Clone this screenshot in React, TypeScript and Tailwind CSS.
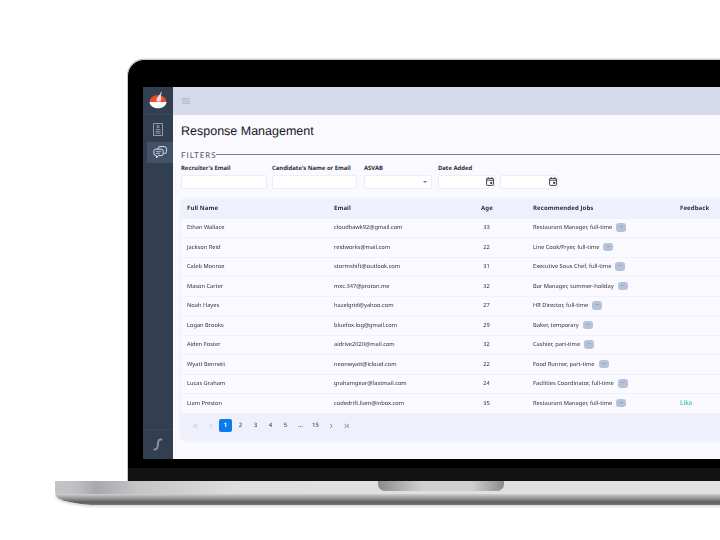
import React from "react";

const rows = [
  ["Ethan Wallace", "cloudhawk92@gmail.com", "33", "Restaurant Manager, full-time", ""],
  ["Jackson Reid", "reidworks@mail.com", "22", "Line Cook/Fryer, full-time", ""],
  ["Caleb Monroe", "stormshift@outlook.com", "31", "Executive Sous Chef, full-time", ""],
  ["Mason Carter", "mxc.347@proton.me", "32", "Bar Manager, summer-holiday", ""],
  ["Noah Hayes", "hazelgrid@yahoo.com", "27", "HR Director, full-time", ""],
  ["Logan Brooks", "bluefox.log@gmail.com", "29", "Baker, temporary", ""],
  ["Aiden Foster", "aidrive2020@mail.com", "32", "Cashier, part-time", ""],
  ["Wyatt Bennett", "neonwyatt@icloud.com", "22", "Food Runner, part-time", ""],
  ["Lucas Graham", "grahamgear@fastmail.com", "24", "Facilities Coordinator, full-time", ""],
  ["Liam Preston", "codedrift.liam@inbox.com", "35", "Restaurant Manager, full-time", "Like"],
];

const Cal = () => (
  <svg width="8" height="9" viewBox="0 0 8 9" fill="none" stroke="#2b2f36" strokeWidth="0.9">
    <rect x="0.6" y="1.4" width="6.8" height="7" rx="0.6" />
    <path d="M0.6 3.2h6.8M2.2.2v1.6M5.8.2v1.6" />
    <rect x="4.2" y="4.9" width="1.9" height="1.9" fill="#2b2f36" stroke="none" />
  </svg>
);

const PageIcon = ({ d, color }: { d: string; color: string }) => (
  <svg width="6" height="6" viewBox="0 0 6 6" fill="none" stroke={color} strokeWidth="0.7" className="mx-auto">
    <path d={d} />
  </svg>
);

function Field({ label, className, pad, children }: { label: string; className: string; pad?: string; children?: React.ReactNode }) {
  return (
    <div className={className}>
      <div className="h-[11px] text-[5.9px] leading-[8px] font-bold text-[#2c2f35] whitespace-nowrap">{label}</div>
      <div className={"h-[14px] bg-white border border-[#eceef6] rounded-[2px] flex items-center justify-end " + (pad ?? "pr-[4px]")}>{children}</div>
    </div>
  );
}

const cols = "grid grid-cols-[147px_147px_52px_147px_1fr] items-center pl-[6px]";

export default function App() {
  return (
    <div className="w-[720px] h-[540px] overflow-hidden bg-white pt-[59px] pl-[127px] [font-family:'Noto_Sans',sans-serif] [text-rendering:geometricPrecision]">
      {/* lid */}
      <div className="w-[640px] h-[422px] bg-black rounded-tl-[17px] border-t-[1.5px] border-l-[1px] border-[#c9c9cb] shadow-[0_-1px_1px_#e8e8e8] flex flex-col">
        <div className="h-[26.5px] shrink-0" />
        <div className="flex h-[372px] ml-[15px] shrink-0 blur-[0.3px]">
          {/* sidebar */}
          <aside className="w-[30px] shrink-0 bg-[#323f50] flex flex-col">
            <div className="h-[28px] border-b border-[#3b4859] flex items-center justify-center">
              <svg width="18" height="20" viewBox="0 0 18 20">
                <path d="M0.5 12a8.5 7 0 0 1 17 0z" fill="#ef4a2c" />
                <path d="M0.5 12h17c-.2 3.6-3.6 6.3-8.5 6.3S.7 15.6.5 12z" fill="#ffffff" />
                <path d="M8 11.5c-1.4-2-.2-3.6 1.4-5.2C10.4 5 11.4 3 13 1.2c-.4 1.6-1 3-1.3 4.3.6 1.4 1 4-.3 6z" fill="#f5ded8" />
              </svg>
            </div>
            <div className="h-[27px] pt-[2px] flex items-center justify-center">
              <svg width="10" height="13" viewBox="0 0 10 13" fill="none" stroke="#aab3c0" strokeWidth="0.8">
                <rect x="0.6" y="0.6" width="8.8" height="11.8" />
                <circle cx="5" cy="3.6" r="1.2" />
                <path d="M2.8 6.6h4.4M2.4 8.4h5.2M2.4 10.2h5.2" />
              </svg>
            </div>
            <div className="h-[21px] ml-[4px] bg-[#43526a] flex items-center justify-center">
              <svg width="14" height="13" viewBox="0 0 14 13" fill="none" stroke="#dfe3ea" strokeWidth="1">
                <path d="M5 3V2.6A2 2 0 0 1 7 .6h4.4a2 2 0 0 1 2 2v3a2 2 0 0 1-2 2h-.8" />
                <path d="M2.8 3.2h5.4a2 2 0 0 1 2 2v2.4a2 2 0 0 1-2 2H5.2L3.6 12l-.3-2.4A2.4 2.4 0 0 1 .8 7.4V5.2a2 2 0 0 1 2-2z" />
                <path d="M3 5.6h5M3 7.4h4" strokeWidth="0.7" />
              </svg>
            </div>
            <div className="flex-1" />
            <div className="h-[30px] border-t border-[#3b4859] flex items-center justify-center">
              <svg width="10" height="13" viewBox="0 0 10 13" fill="none" stroke="#8794a6" strokeWidth="2">
                <path d="M9.2 1.6C6.6 1 5.6 2 5.2 4.2L4.6 8.4C4.2 10.8 3 12 .6 11.4" />
              </svg>
            </div>
          </aside>
          {/* main */}
          <main className="flex-1 min-w-0 bg-[#f9f9ff] flex flex-col">
            <header className="h-[28px] shrink-0 bg-[#d5daea] flex items-center justify-between pl-[9px] pr-[14px]">
              <svg width="8" height="6" viewBox="0 0 8 6" stroke="#a5acbd" strokeWidth="0.9">
                <path d="M0 .8h8M0 3h8M0 5.2h8" />
              </svg>
              <div className="w-[15px] h-[15px] rounded-full bg-[radial-gradient(circle_at_65%_55%,#d8a598_0,#a88b86_45%,#77757c_75%,#b8bac8_100%)] blur-[0.6px]" />
            </header>
            <div className="flex-1 pl-[8px] flex flex-col">
              <h1 className="h-[33px] pt-[6px] [font-family:'Liberation_Sans',sans-serif] text-[12.5px] leading-[20px] text-[#15181d] whitespace-nowrap">Response Management</h1>
              <div className="h-[14px] flex items-center">
                <span className="text-[8px] leading-[10px] tracking-[0.95px] text-[#4d5563] [font-family:'Lato',sans-serif]">FILTERS</span>
                <div className="flex-1 h-px bg-[#7d8087]" />
              </div>
              <div className="flex mt-[2px] w-[420px]">
                <Field label="Recruiter's Email" className="w-[86px] mr-[5px] shrink-0" />
                <Field label="Candidate's Name or Email" className="w-[85px] mr-[7px] shrink-0" />
                <Field label="ASVAB" className="w-[68px] mr-[6px] shrink-0">
                  <span className="w-0 h-0 border-l-[2px] border-r-[2px] border-t-[2px] border-l-transparent border-r-transparent border-t-[#777c86]" />
                </Field>
                <Field label="Date Added" pad="pr-[0.5px]" className="w-[57px] mr-[5px] shrink-0"><Cal /></Field>
                <Field label="&nbsp;" pad="pr-[0.5px]" className="w-[58px] shrink-0"><Cal /></Field>
              </div>
              {/* table */}
              <section className="mt-[10px] w-[600px] rounded-[4px] bg-[#eef0fb] shadow-[0_1px_4px_#e6e7f5] text-[5.7px] text-[#2a2e35]">
                <div className={"h-[20px] text-[6px] font-bold text-[#2c3038] tracking-[0.1px] " + cols}>
                  <div>Full Name</div>
                  <div>Email</div>
                  <div>Age</div>
                  <div>Recommended Jobs</div>
                  <div>Feedback</div>
                </div>
                {rows.map((r) => (
                  <div key={r[0]} className={"h-[19.5px] bg-[#faf9ff] border-b border-[#f1f1f9] " + cols}>
                    <div>{r[0]}</div>
                    <div>{r[1]}</div>
                    <div className="w-[11px] text-center">{r[2]}</div>
                    <div className="flex items-center gap-[4px] whitespace-nowrap">
                      {r[3]}
                      <span className="w-[10px] h-[8.5px] rounded-[3px] bg-[#b6c1da] text-center text-[5px] leading-[7px] text-[#4b5568]">...</span>
                    </div>
                    <div className="text-[#12b886] text-[6.6px]">{r[4]}</div>
                  </div>
                ))}
                <div className="h-[25px] pl-[7px] pb-[1px] flex items-center text-[6px] font-medium text-[#454b56]">
                  {["first", "prev", "1", "2", "3", "4", "5", "...", "15", "next", "last"].map((p) => (
                    <span
                      key={p}
                      className={
                        p === "1"
                          ? "w-[13px] h-[13px] mx-[1px] rounded-[2px] bg-[#0a7cf0] text-white font-bold flex items-center justify-center"
                          : "w-[15px] text-center"
                      }
                    >
                      {p === "first" ? <PageIcon d="M1 1v4M4.6 1L2.4 3l2.2 2" color="#b4b9c4" /> :
                       p === "prev" ? <PageIcon d="M3.8 1L1.8 3l2 2" color="#b4b9c4" /> :
                       p === "next" ? <PageIcon d="M2.2 1l2 2-2 2" color="#555b66" /> :
                       p === "last" ? <PageIcon d="M1.4 1l2.2 2-2.2 2M5 1v4" color="#555b66" /> : p}
                    </span>
                  ))}
                </div>
              </section>
            </div>
          </main>
        </div>
        <div className="flex-1 mt-[9px] bg-[#121212]" />
      </div>
      {/* base */}
      <div className="w-[680px] -ml-[72px] h-[24px] flex flex-col">
        <div className="relative h-[13px] bg-[linear-gradient(90deg,#c4c4c6_0,#c0c0c2_3%,#a9a9ac_6%,#c4c4c6_12%,#dedede_27%,#e2e2e2_100%)] rounded-bl-[2px]">
          <div className="absolute left-[323px] top-0 w-[126px] h-[10px] rounded-b-[7px] bg-[linear-gradient(90deg,#8b8b8d,#d0d0d0_35%,#cfcfcf_75%,#8b8b8d)]" />
        </div>
        <div className="h-[11px] rounded-bl-[45px_11px] bg-[linear-gradient(180deg,#cfcfd1,#8d8d90_45%,#5d5d60_75%,#77777a)] shadow-[0_2px_2px_#dedede]" />
      </div>
    </div>
  );
}
